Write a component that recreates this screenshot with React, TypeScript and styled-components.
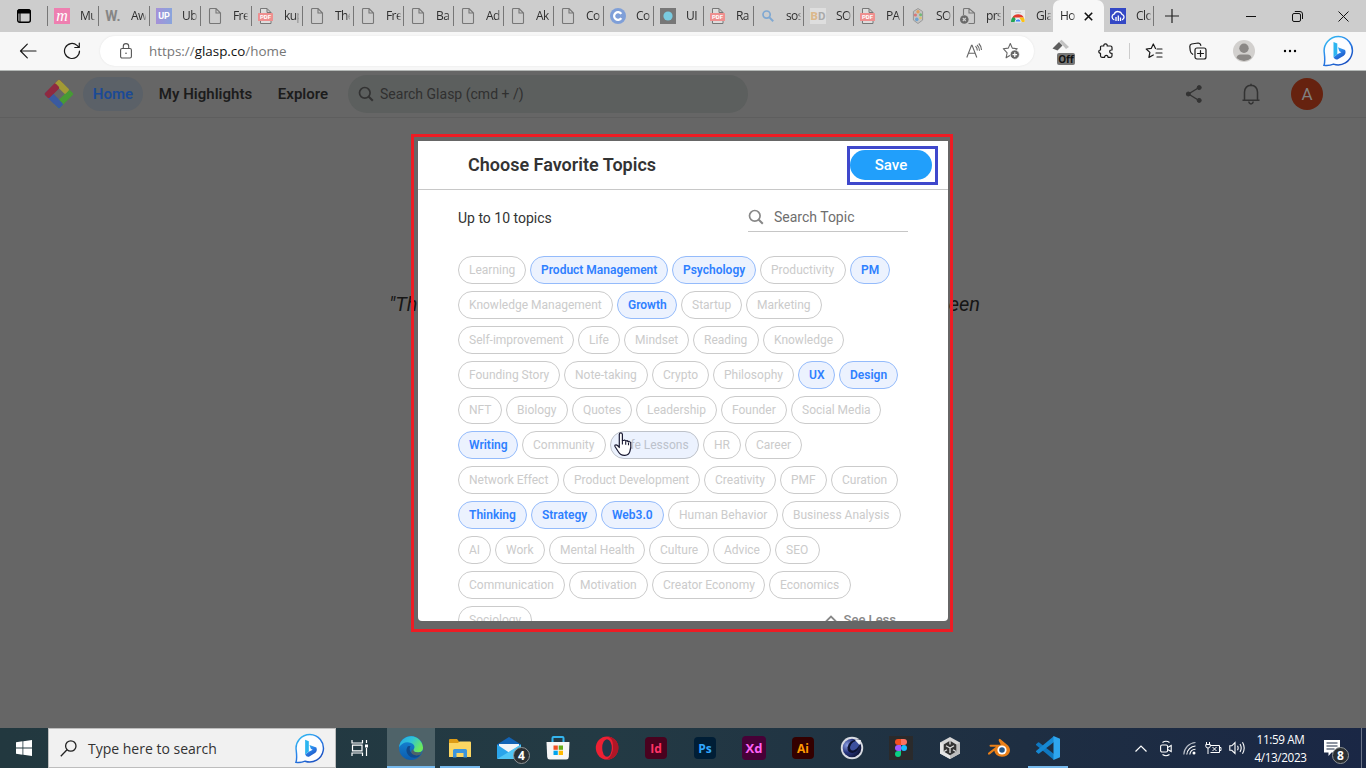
import React from "react";
import styled, { createGlobalStyle, css } from "styled-components";

const UI = `"Open Sans", "Noto Sans", sans-serif`;

const GlobalStyle = createGlobalStyle`
  * { box-sizing: border-box; }
  html, body { margin: 0; padding: 0; overflow: hidden; }
  body { font-family: Roboto, sans-serif; }
  svg { display: block; flex: none; }
`;

const Screen = styled.div`
  width: 1366px;
  height: 768px;
  display: flex;
  flex-direction: column;
  overflow: hidden;
  background: #666;
`;

/* ---------- Tab strip ---------- */

const TabStrip = styled.div`
  height: 32px;
  display: flex;
  background: #cdcdcd;
  flex: none;
`;

const TabActions = styled.div`
  width: 47px;
  display: flex;
  align-items: center;
  justify-content: center;
`;

const Tab = styled.div<{ $w: number }>`
  width: ${(p) => p.$w}px;
  height: 20px;
  margin-top: 6px;
  padding-left: 6px;
  border-left: 1px solid #777;
  display: flex;
  align-items: center;
  gap: 10px;
  overflow: hidden;
  flex: none;
`;

const TabTitle = styled.span<{ $w?: number }>`
  width: ${(p) => p.$w ?? 15}px;
  font: 12px/16px ${UI};
  letter-spacing: -0.6px;
  color: #2e2e2e;
  white-space: nowrap;
  overflow: hidden;
  mask-image: linear-gradient(to right, #000 75%, rgba(0, 0, 0, 0.2) 100%);
`;

const ActiveTab = styled.div`
  width: 51px;
  height: 32px;
  padding-left: 7px;
  display: flex;
  align-items: center;
  gap: 8px;
  background: #f7f7f7;
  border-radius: 7px 7px 0 0;
  flex: none;
`;

const LastTab = styled(Tab)`
  border-left: 0;
  border-right: 1px solid #777;
  padding-left: 6px;
`;

const WindowControls = styled.div`
  margin-left: auto;
  display: flex;
`;

const Slot = styled.div<{ $w: number }>`
  width: ${(p) => p.$w}px;
  height: 100%;
  display: flex;
  align-items: center;
  justify-content: center;
  flex: none;
`;

const LetterIcon = styled.span<{ $bg: string; $fg: string; $size?: number; $script?: boolean }>`
  width: 16px;
  height: 16px;
  display: flex;
  align-items: center;
  justify-content: center;
  background: ${(p) => p.$bg};
  color: ${(p) => p.$fg};
  font: ${(p) => (p.$script ? `italic 400 ${p.$size}px/16px "Liberation Serif", serif` : `700 ${p.$size ?? 11}px/16px Roboto, sans-serif`)};
  flex: none;
  b { color: #dcb98c; }
`;

const FileIcon = () => (
  <svg width="16" height="16" viewBox="0 0 16 16" fill="none" stroke="#777" strokeWidth="1.1">
    <path d="M2.5 1.5Q2.5.5 3.5.5H9l4.5 4.5v9.5q0 1-1 1h-9q-1 0-1-1zM9 .5V5h4.5" />
  </svg>
);

const PdfIcon = () => (
  <svg width="16" height="16" viewBox="0 0 16 16">
    <path d="M2.500.5H9l4 4v11H2.500zM9 .5v4h4" fill="#ddd" stroke="#777" />
    <rect x="0" y="5" width="15" height="8" rx=".6" fill="#ee8f8f" />
    <text x="7.5" y="11.300" fontSize="6" fontWeight="700" fill="#fff" textAnchor="middle" fontFamily="Roboto, sans-serif">PDF</text>
  </svg>
);

const favicons: Record<string, React.ReactNode> = {
  m: <LetterIcon $bg="#ee7fb0" $fg="#fff" $size={16} $script>m</LetterIcon>,
  w: <LetterIcon $bg="transparent" $fg="#868686" $size={14}>W.</LetterIcon>,
  up: <LetterIcon $bg="linear-gradient(90deg,#a591d8,#89a4dc)" $fg="#fff" $size={9}>UP</LetterIcon>,
  file: <FileIcon />,
  pdf: <PdfIcon />,
  c: (
    <svg width="16" height="16" viewBox="0 0 16 16">
      <circle cx="8" cy="8" r="8" fill="#7f9fd8" />
      <path d="M11.3 5.9A3.9 3.9 0 1 0 11.3 10.1" fill="none" stroke="#fff" strokeWidth="2.2" />
    </svg>
  ),
  dot: (
    <svg width="16" height="16" viewBox="0 0 16 16">
      <path fill="#777" d="M0 0h16v16H0z" />
      <circle cx="8" cy="8" r="4.6" fill="#7acbe0" />
    </svg>
  ),
  search: (
    <svg width="16" height="16" viewBox="0 0 16 16" fill="none" stroke="#7fa8d2">
      <circle cx="6.600" cy="6.600" r="3.600" strokeWidth="1.700" />
      <path d="M9.400 9.400l3.800 3.800" strokeWidth="2" />
    </svg>
  ),
  bd: <LetterIcon $bg="#dedede" $fg="#aaa" $size={11.5}><b>B</b>D</LetterIcon>,
  hex: (
    <svg width="16" height="16" viewBox="0 0 16 16">
      <path d="M8 .5l4.600 3v8.600L8 15.500l-4.600-3.400V3.500z" fill="#c4c4c4" stroke="#999" />
      <circle cx="8" cy="3.700" r="1.700" fill="#e0a060" />
      <circle cx="5.400" cy="7" r="1.600" fill="#d87878" />
      <circle cx="10.600" cy="6.800" r="1.500" fill="#72b878" />
      <circle cx="6.800" cy="11.400" r="1.800" fill="#70a4d0" />
      <circle cx="10.500" cy="10" r="1.300" fill="#e0c070" />
    </svg>
  ),
  broken: (
    <svg width="16" height="16" viewBox="0 0 16 16">
      <path d="M3.500 7V1.500q0-1 1-1H9L14.500 5v9.500q0 1-1 1H8.500M9 .5V5h5" fill="none" stroke="#777" strokeWidth="1.100" />
      <circle cx="4.300" cy="11.500" r="4.300" fill="#6a6a6a" />
      <path d="M2.800 10l3 3m0-3l-3 3" stroke="#d0d0d0" strokeWidth="1.100" />
    </svg>
  ),
  chrome: (
    <svg width="16" height="16" viewBox="0 0 16 16">
      <path d="M1 2h14v12H1z" fill="#e9e9e9" />
      <path d="M5 4.500h6" stroke="#ccc" />
      <path d="M1 14a7 7 0 0 1 3-6l3 6z" fill="#23a455" />
      <path d="M2.500 9.500a6.500 6.500 0 0 1 11.300 0H8z" fill="#e33b2e" />
      <path d="M13.800 9.500A7 7 0 0 1 14.600 14H9l1-4.500z" fill="#fbc116" />
      <path d="M5 14a3.100 3.100 0 0 1 6.200 0z" fill="#4285f4" stroke="#fff" strokeWidth=".8" />
    </svg>
  ),
  cloud: (
    <svg width="16" height="16" viewBox="0 0 16 16">
      <path fill="#3448c5" d="M0 0h16v16H0z" />
      <path d="M4.300 11.800a2.900 2.900 0 0 1-.2-5.600 4.200 4.200 0 0 1 7.900.2 2.800 2.800 0 0 1 0 5.400" fill="none" stroke="#fff" strokeWidth="1.300" />
      <path d="M6 9v4M8.300 7.500V13M10.500 9.500V13" stroke="#fff" strokeWidth="1.300" />
    </svg>
  ),
};

const tabs: [string, string, number][] = [
  ["m", "Mu", 51], ["w", "Aw", 51], ["up", "Ub", 51], ["file", "Fre", 51], ["pdf", "kup", 51],
  ["file", "The", 51], ["file", "Fre", 50], ["file", "Ba", 50], ["file", "Ad", 50], ["file", "Ak", 50],
  ["file", "Co", 50], ["c", "Co", 50], ["dot", "UI", 50], ["pdf", "Ra", 50], ["search", "sos", 50],
  ["bd", "SO", 50], ["pdf", "PA", 50], ["hex", "SO", 50], ["broken", "prs", 50], ["chrome", "Gla", 50],
];

/* ---------- Address bar ---------- */

const Toolbar = styled.div`
  height: 39px;
  display: flex;
  align-items: center;
  background: #f7f7f7;
  border-bottom: 1px solid #b4b8b6;
  flex: none;
`;

const AddressBar = styled.div`
  width: 934px;
  height: 30px;
  padding: 0 14px 0 20px;
  display: flex;
  align-items: center;
  background: #fff;
  border-radius: 15px;
  box-shadow: 0 0 2px #e2e2e2;
  flex: none;
`;

const Url = styled.span`
  margin: 0 auto 0 17px;
  font: 13.4px/20px ${UI};
  color: #767676;
  b { font-weight: 400; color: #111; }
`;

const Divider = styled.i`
  width: 1px;
  height: 16px;
  background: #ccc;
`;

const BarIcon = ({ w = 18, children }: { w?: number; children: React.ReactNode }) => (
  <svg width={w} height={w} viewBox={`0 0 ${w} ${w}`} fill="none" stroke="#1a1a1a" strokeWidth="1.2" strokeLinecap="round" strokeLinejoin="round">
    {children}
  </svg>
);

const BingIcon = ({ size, id }: { size: number; id: string }) => (
  <svg width={size} height={size} viewBox="0 0 32 32">
    <defs>
      <linearGradient id={id} x1="0" y1="0" x2=".7" y2="1">
        <stop offset="0" stopColor="#35c6f4" />
        <stop offset=".5" stopColor="#2a83ea" />
        <stop offset="1" stopColor="#1a4fc0" />
      </linearGradient>
    </defs>
    <path d="M16.500 1.500a14.200 14.200 0 1 1-5 27.600Q7 31 2 30.300 3.300 27 2.300 18A14.300 14.300 0 0 1 16.500 1.500z" fill="#fcfdff" stroke={`url(#${id})`} strokeWidth="1.500" />
    <path d="M11.500 7l3.800 1.600v10.600l-3.800 3z" fill="#2bb5f0" />
    <path d="M11.500 22.200l3.800-2.900 4-2.100-1.900-1-1.500-3.900 7.200 2.700q1.400 3.600-1.400 5.700l-6.300 3.700q-2.300.7-3.900-2.200z" fill={`url(#${id})`} />
  </svg>
);

/* ---------- Page ---------- */

const Page = styled.main`
  height: 657px;
  position: relative;
  background: #666;
  flex: none;
`;

const SiteHeader = styled.header`
  height: 47px;
  padding-left: 44px;
  display: flex;
  align-items: center;
  border-bottom: 1px solid #5e5e5e;
`;

const NavLink = styled.a<{ $active?: boolean; $w: number }>`
  width: ${(p) => p.$w}px;
  height: 34px;
  display: flex;
  align-items: center;
  justify-content: center;
  border-radius: 17px;
  font-size: 15px;
  font-weight: 600;
  letter-spacing: 0.02px;
  white-space: nowrap;
  color: #1c1c1c;
  ${(p) => p.$active && css`
    color: #1b4a96;
    background: #5b6168;
  `}
`;

const HeaderSearch = styled.div`
  width: 400px;
  height: 38px;
  margin-left: 10px;
  padding-left: 10px;
  display: flex;
  align-items: center;
  gap: 6px;
  border-radius: 19px;
  background: #5c5f5e;
  color: #303030;
  font-size: 14px;
  letter-spacing: 0.01px;
`;

const HeaderActions = styled.div`
  margin-left: auto;
  padding-right: 31px;
  height: 100%;
  display: flex;
  align-items: center;
`;

const Avatar = styled.span`
  width: 32px;
  height: 32px;
  border-radius: 50%;
  display: flex;
  align-items: center;
  justify-content: center;
  background: #66220f;
  color: #808080;
  font-size: 17px;
`;

const Quote = styled.p`
  width: 591px;
  margin: 174px 0 0 389px;
  display: flex;
  justify-content: space-between;
  font: italic 20px/24px Roboto, sans-serif;
  color: #161616;
`;

const Outline = styled.div<{ $x: number; $y: number; $w: number; $h: number; $color: string }>`
  position: absolute;
  left: ${(p) => p.$x}px;
  top: ${(p) => p.$y}px;
  width: ${(p) => p.$w}px;
  height: ${(p) => p.$h}px;
  border: 3px solid ${(p) => p.$color};
  pointer-events: none;
`;

const Modal = styled.section`
  position: absolute;
  left: 418px;
  top: 70px;
  width: 530px;
  height: 480px;
  background: #fff;
  border-radius: 0 0 4px 4px;
  overflow: hidden;
  display: flex;
  flex-direction: column;
`;

const ModalHeader = styled.div`
  height: 49px;
  padding: 0 16px 0 50px;
  display: flex;
  align-items: center;
  justify-content: space-between;
  border-bottom: 1px solid #c8c8c8;
  flex: none;
`;

const ModalTitle = styled.h2`
  margin: 0;
  font-size: 18px;
  line-height: 22px;
  font-weight: 600;
  color: #333;
`;

const SaveButton = styled.button`
  width: 82px;
  height: 30px;
  padding: 0;
  border: 0;
  border-radius: 15px;
  background: #219ffb;
  color: #fff;
  font: 500 15px Roboto, sans-serif;
`;

const FilterRow = styled.div`
  height: 42px;
  margin-bottom: 24px;
  padding: 0 40px;
  display: flex;
  justify-content: space-between;
  flex: none;
`;

const Hint = styled.span`
  font-size: 14px;
  line-height: 56px;
  color: #333;
`;

const TopicSearch = styled.div`
  width: 160px;
  padding-top: 13px;
  display: flex;
  align-items: center;
  gap: 10px;
  border-bottom: 1px solid #c6c6c6;
  font-size: 14px;
  color: #6e6e6e;
`;

const Topics = styled.div`
  padding-left: 40px;
  display: flex;
  flex-direction: column;
  gap: 7px;
`;

const TopicRow = styled.div`
  display: flex;
  gap: 4px;
`;

const Chip = styled.span<{ $w: number; $state: string }>`
  width: ${(p) => p.$w}px;
  height: 28px;
  display: flex;
  align-items: center;
  padding-left: 10px;
  border: 1px solid #cbcbcb;
  border-radius: 14px;
  font-size: 12px;
  white-space: nowrap;
  color: #cbcbcb;
  flex: none;
  ${(p) => p.$state === "on" && css`
    color: #2f80ff;
    font-weight: 600;
    border-color: #94bbfb;
    background: #ecf2fe;
  `}
  ${(p) => p.$state === "hover" && css`
    color: #bcc2cc;
    border-color: #bec2c9;
    background: #ecf2fe;
  `}
`;

const SeeLess = styled.span`
  margin: 4px 52px 0 auto;
  height: 18px;
  display: flex;
  align-items: center;
  gap: 7px;
  font-size: 13px;
  font-weight: 500;
  color: #888;
`;

const Pointer = styled.svg`
  position: absolute;
  left: 613px;
  top: 360px;
`;

const topics: [string, number, string?][][] = [
  [["Learning", 68], ["Product Management", 138, "on"], ["Psychology", 84, "on"], ["Productivity", 86], ["PM", 40, "on"]],
  [["Knowledge Management", 155], ["Growth", 60, "on"], ["Startup", 61], ["Marketing", 76]],
  [["Self-improvement", 116], ["Life", 42], ["Mindset", 65], ["Reading", 66], ["Knowledge", 81]],
  [["Founding Story", 102], ["Note-taking", 84], ["Crypto", 57], ["Philosophy", 81], ["UX", 37, "on"], ["Design", 59, "on"]],
  [["NFT", 44], ["Biology", 62], ["Quotes", 60], ["Leadership", 81], ["Founder", 66], ["Social Media", 90]],
  [["Writing", 60, "on"], ["Community", 84], ["Life Lessons", 89, "hover"], ["HR", 38], ["Career", 57]],
  [["Network Effect", 101], ["Product Development", 137], ["Creativity", 72], ["PMF", 47], ["Curation", 67]],
  [["Thinking", 69, "on"], ["Strategy", 66, "on"], ["Web3.0", 63, "on"], ["Human Behavior", 110], ["Business Analysis", 119]],
  [["AI", 33], ["Work", 50], ["Mental Health", 96], ["Culture", 60], ["Advice", 58], ["SEO", 45]],
  [["Communication", 107], ["Motivation", 79], ["Creator Economy", 113], ["Economics", 82]],
  [["Sociology", 74]],
];

const SearchGlyph = ({ color }: { color: string }) => (
  <svg width="16" height="16" viewBox="0 0 16 16" fill="none" stroke={color}>
    <circle cx="6.800" cy="6.800" r="5.300" strokeWidth="1.700" />
    <path d="M10.500 10.500L14.800 14.800" strokeWidth="2" />
  </svg>
);

/* ---------- Taskbar ---------- */

const Taskbar = styled.footer`
  height: 40px;
  display: flex;
  background: linear-gradient(90deg, #22383f 0%, #233a44 45%, #1e2e42 75%, #1a2745 100%);
  flex: none;
`;

const TaskSearch = styled.div`
  width: 288px;
  height: 40px;
  padding: 0 10px 0 11px;
  display: flex;
  align-items: center;
  background: #f1f1f1;
  border: 1px solid #bdbdbd;
  font: 14px/20px ${UI};
  color: #333;
  flex: none;
  span { margin: 2px auto 0 11px; }
`;

const AppSlot = styled.div<{ $active?: boolean; $running?: boolean }>`
  width: 48px;
  margin-right: 1px;
  height: 40px;
  position: relative;
  display: flex;
  align-items: center;
  justify-content: center;
  background: ${(p) => (p.$active ? "#4f6369" : "transparent")};
  flex: none;
  ${(p) => (p.$active || p.$running) && css`
    &::after {
      content: "";
      position: absolute;
      bottom: 0;
      left: ${p.$active ? 0 : 4}px;
      right: ${p.$active ? 0 : 4}px;
      height: 2px;
      background: #76b9ed;
    }
  `}
`;

const AdobeIcon = styled.span<{ $bg: string; $fg: string; $size?: number }>`
  width: ${(p) => p.$size ?? 22}px;
  height: ${(p) => p.$size ?? 22}px;
  border-radius: 4px;
  display: flex;
  align-items: center;
  justify-content: center;
  background: ${(p) => p.$bg};
  color: ${(p) => p.$fg};
  font: 700 ${(p) => (p.$size ? 13 : 12)}px ${UI};
`;

const Badge = styled.span<{ $x: number; $y: number }>`
  position: absolute;
  left: ${(p) => p.$x}px;
  top: ${(p) => p.$y}px;
  width: 17px;
  height: 17px;
  border-radius: 50%;
  border: 1px solid #8f9496;
  background: #2b3033;
  color: #fff;
  font: 700 12px/15px ${UI};
  text-align: center;
`;

const Tray = styled.div`
  margin-left: auto;
  height: 40px;
  display: flex;
  align-items: center;
`;

const Clock = styled.div`
  width: 63px;
  display: flex;
  flex-direction: column;
  align-items: center;
  font: 11.700px/18px ${UI};
  letter-spacing: -0.36px;
  white-space: nowrap;
  color: #fff;
`;

const Notifications = styled(Slot)`
  position: relative;
  justify-content: flex-start;
  padding-left: 12px;
`;

const ShowDesktop = styled.i`
  width: 5px;
  height: 40px;
  border-left: 1px solid #6b7488;
`;

const EdgeIcon = () => (
  <svg width="24" height="24" viewBox="0 0 24 24">
    <defs>
      <linearGradient id="edgeTop" x1="0" y1="0" x2="1" y2=".5">
        <stop offset="0" stopColor="#27a9e3" />
        <stop offset=".5" stopColor="#2fc2d8" />
        <stop offset="1" stopColor="#6cea5c" />
      </linearGradient>
      <linearGradient id="edgeLow" x1="0" y1="0" x2="0" y2="1">
        <stop offset="0" stopColor="#1689d8" />
        <stop offset="1" stopColor="#0c5cae" />
      </linearGradient>
    </defs>
    <circle cx="12" cy="12" r="12" fill="url(#edgeLow)" />
    <path d="M.1 11A12 12 0 0 1 24 11.500q.2 4.500-4.500 5-3.800.2-5-1.600-.4-.6.300-1.600 2.200-4-2.800-6.300Q5 4.500.1 11z" fill="url(#edgeTop)" />
    <path d="M8.800 10.200q-3 4.800.6 9 3.600 4 9.800 1.800l2.600-2.800q-5 2.400-8.800-.6-3.800-3.400-1.500-7.600z" fill="#114a8b" />
    <path d="M14 13q.3 3.500 5.500 3.500 2 0 3.500-1.200-.5 2.400-1.800 3.300-4.600 2-8-.6-2.300-2.200.8-5z" fill="#4f6369" />
  </svg>
);

const ExplorerIcon = () => (
  <svg width="22" height="19" viewBox="0 0 22 19">
    <path d="M0 1q0-1 1-1h7l2 2.500V6H0z" fill="#dd9c16" />
    <path d="M0 4h9l1.500-1.500H21q1 0 1 1V18H0z" fill="#fbd662" />
    <path d="M4 18.500v-7q0-1.500 1.500-1.500h11q1.500 0 1.500 1.500v7h-3.500V14h-7v4.500z" fill="#3b95dc" />
  </svg>
);

const MailIcon = () => (
  <svg width="24" height="24" viewBox="0 0 24 24">
    <path d="M0 8.500L12 1l12 7.500v3H0z" fill="#1263b5" />
    <path d="M2 8h20v5l-10 7-10-7z" fill="#f1f4f8" />
    <path d="M0 8.500l12 8L24 8.500V22q0 1-1 1H1q-1 0-1-1z" fill="#2aa4ea" />
    <path d="M0 23L24 8.500V22q0 1-1 1z" fill="#50c5f5" />
  </svg>
);

const StoreIcon = () => (
  <svg width="24" height="24" viewBox="0 0 24 24">
    <path d="M6.500 7V2q0-1 1-1h9q1 0 1 1v5" fill="none" stroke="#34b5ee" strokeWidth="2" />
    <path d="M.5 6h23l-.7 15q-.2 2.500-2.500 2.500H3.700Q1.400 23.500 1.200 21z" fill="#f6f6f6" />
    <path d="M7.500 9.500h4.300v4.300H7.500z" fill="#f25022" />
    <path d="M12.700 9.500H17v4.300h-4.300z" fill="#65ad19" />
    <path d="M7.500 14.700h4.300V19H7.500z" fill="#00a4ef" />
    <path d="M12.700 14.700H17V19h-4.300z" fill="#ffb900" />
  </svg>
);

const OperaIcon = () => (
  <svg width="24" height="24" viewBox="0 0 24 24">
    <ellipse cx="12" cy="12" rx="11.200" ry="11.500" fill="#ee2033" />
    <path d="M12 .5q4.500 1 5.500 5.500 1.500 7-1 12-1.500 4-4.500 5.500a11.500 11.500 0 0 0 0-23z" fill="#b01626" />
    <ellipse cx="12" cy="12" rx="4.800" ry="8.800" fill="#22374a" />
  </svg>
);

const CinemaIcon = () => (
  <svg width="24" height="24" viewBox="0 0 24 24">
    <defs>
      <radialGradient id="c4dBall" cx=".25" cy=".35" r=".8">
        <stop offset="0" stopColor="#8c9fe2" />
        <stop offset=".5" stopColor="#27357e" />
        <stop offset="1" stopColor="#0e1433" />
      </radialGradient>
    </defs>
    <circle cx="12" cy="12" r="11.200" fill="#d8dbe2" />
    <circle cx="12" cy="12" r="9.300" fill="url(#c4dBall)" />
    <path d="M20 3.500q-11-.5-12.500 8-.3 5 5 5.500 6-1 7.500-9.500z" fill="#0c1230" />
    <path d="M20 4q-8.500.5-10 7 0 4.300 4 3.300 5.500-3 6-8z" fill="#3c4f9c" />
    <path d="M14.500 3.500l6.500.500-1.500 5z" fill="#eceef4" />
  </svg>
);

const FigmaIcon = () => (
  <svg width="24" height="24" viewBox="0 0 24 24">
    <path fill="#2a2a2b" d="M0 0h24v24H0z" />
    <path d="M12 3H9a3 3 0 0 0 0 6h3z" fill="#f24e1e" />
    <path d="M12 3h3a3 3 0 0 1 0 6h-3z" fill="#ff7262" />
    <path d="M12 9H9a3 3 0 0 0 0 6h3z" fill="#a259ff" />
    <circle cx="15" cy="12" r="3" fill="#1abcfe" />
    <path d="M12 15H9a3 3 0 1 0 3 3z" fill="#0acf83" />
  </svg>
);

const UnityIcon = () => (
  <svg width="22" height="24" viewBox="0 0 22 24">
    <path d="M11 1l10 5.500v11L11 23 1 17.500v-11z" fill="#d6d6d6" />
    <path d="M11 12v11L1 17.500v-11z" fill="#e6e6e6" />
    <path d="M11 12v11l10-5.500v-11z" fill="#bdbdbd" />
    <path d="M11 4.800l6.300 3.600v7.200L11 19.200l-6.300-3.600V8.400z" fill="#333" />
    <path d="M11 5v3.500M17 15.500l-3-1.800M5 15.500l3-1.800M11 12v5M11 12L7 9.700M11 12l4-2.300" stroke="#ddd" strokeWidth="1.300" fill="none" />
  </svg>
);

const BlenderIcon = () => (
  <svg width="24" height="20" viewBox="0 0 24 20">
    <path d="M12 1.200q.7-.7 1.500 0l7.500 6.300q3 3.300 1.500 7-2.300 4.300-7.500 4.300-6.800-.3-7.700-6L3 16.300q-1.500.8-2-.3-.3-.8.600-1.400L9 8.700H3.500q-1.200-.2-1-1.200.2-.7 1-.7h10.300L11.900 2.900q-.6-.9.100-1.700z" fill="#ea8018" />
    <circle cx="15" cy="12" r="4.600" fill="#fff" />
    <circle cx="15" cy="12" r="2.800" fill="#265787" />
  </svg>
);

const CodeIcon = () => (
  <svg width="24" height="24" viewBox="0 0 24 24">
    <path d="M0 8.200l2-1.800q.6-.4 1.200 0L18 18v6L.3 9.300q-.6-.6-.3-1.100z" fill="#0f78c1" />
    <path d="M0 15.800l2 1.800q.6.4 1.200 0L18 6V0L.3 14.700q-.6.600-.3 1.100z" fill="#1688d3" />
    <path d="M17.500 0L24 2.800v18.400L17.500 24z" fill="#2ea5ee" />
  </svg>
);

export default function App() {
  return (
    <Screen>
      <GlobalStyle />
      <TabStrip>
        <TabActions>
          <svg width="14" height="14" viewBox="0 0 14 14">
            <rect x=".7" y=".7" width="12.600" height="12.600" rx="2" fill="none" stroke="#000" strokeWidth="1.400" />
            <path d="M1 1h12v3H1zM3 4v9" stroke="#000" fill="#000" />
          </svg>
        </TabActions>
        {tabs.map(([icon, title, w], i) => (
          <Tab key={i} $w={w}>
            {favicons[icon]}
            <TabTitle>{title}</TabTitle>
          </Tab>
        ))}
        <ActiveTab>
          <TabTitle $w={16}>Ho</TabTitle>
          <svg width="9" height="9" viewBox="0 0 9 9"><path d="M.8.8l7.400 7.400m0-7.400L.8 8.200" stroke="#111" strokeWidth="1.600" /></svg>
        </ActiveTab>
        <LastTab $w={50}>
          {favicons.cloud}
          <TabTitle>Clo</TabTitle>
        </LastTab>
        <Slot $w={35}>
          <svg width="14" height="14" viewBox="0 0 14 14"><path d="M7 0v14M0 7h14" stroke="#222" strokeWidth="1.200" /></svg>
        </Slot>
        <WindowControls>
          <Slot $w={46}><svg width="10" height="10"><path d="M0 5.500h10" stroke="#111" /></svg></Slot>
          <Slot $w={46}>
            <svg width="11" height="11" viewBox="0 0 11 11" fill="none" stroke="#111">
              <rect x=".5" y="2.500" width="8" height="8" rx="1.500" />
              <path d="M2.800.5H8q2.500 0 2.500 2.500v5" />
            </svg>
          </Slot>
          <Slot $w={46}><svg width="11" height="11" viewBox="0 0 11 11"><path d="M.5.5l10 10m0-10l-10 10" stroke="#111" /></svg></Slot>
        </WindowControls>
      </TabStrip>

      <Toolbar>
        <Slot $w={56}><BarIcon><path d="M17 9H1.500M8.300 2.200L1.500 9l6.800 6.800" /></BarIcon></Slot>
        <Slot $w={32}>
          <BarIcon><path d="M16.500 9A7.500 7.500 0 1 1 14 3.400L16 5.300M16.300 1v4.500h-4.500" /></BarIcon>
        </Slot>
        <Slot $w={12} />
        <AddressBar>
          <svg width="12" height="16" viewBox="0 0 12 16" fill="none" stroke="#555" strokeWidth="1.100">
            <rect x=".6" y="5.500" width="10.800" height="9.500" rx="1.500" />
            <path d="M3.300 5.500V3.300a2.700 2.700 0 0 1 5.400 0v2.200" />
            <circle cx="6" cy="10.200" r=".8" fill="#555" stroke="none" />
          </svg>
          <Url>https://<b>glasp.co</b>/home</Url>
          <svg width="17" height="16" viewBox="0 0 17 16" fill="none" stroke="#666" strokeWidth="1.100">
            <path d="M.8 14.500L5.500 2.200h.6l4.700 12.300M2.500 10.300h6.700M9.500 3.200q1.800 1.800 1.800 4.300M11 1.800q2.500 2.300 2.500 6M12.800.5q2.800 3 2.700 6.500" />
          </svg>
          <Slot $w={19} />
          <svg width="18" height="18" viewBox="0 0 18 18">
            <path d="M8.300 1.500l2 4.600 5 .6-3.700 3.300.3 2-3.600 1.300-4.200 2.500 1-5L1.300 6.700l5-.6z" fill="none" stroke="#666" strokeWidth="1.100" strokeLinejoin="round" />
            <circle cx="12.800" cy="12.600" r="4.600" fill="#666" stroke="#fff" strokeWidth=".7" />
            <path d="M12.800 10.300v4.600M10.500 12.600h4.600" stroke="#fff" strokeWidth="1.200" />
          </svg>
        </AddressBar>
        <Slot $w={60}>
          <svg width="24" height="28" viewBox="0 0 24 28">
            <path d="M.5 11.500l6.500-6.500 3.500 3.500-5 5z" fill="#5e5e5e" />
            <path d="M7.500 4.500l2-1.800L17 10l-3 2z" fill="#c2c2c2" />
            <rect x="5" y="16" width="18" height="12" rx="2" fill="#777" />
            <text x="14" y="25.700" fontSize="10" fontWeight="700" textAnchor="middle" fill="#111" fontFamily="Open Sans, sans-serif">Off</text>
          </svg>
        </Slot>
        <Slot $w={24}>
          <BarIcon w={16}>
            <path d="M3.500 3h2.300Q5.600.8 7.500.8T9.200 3h3.300q1.500 0 1.500 1.500V7q-2.300-.2-2.300 1.600T14 10.300v2.500q0 1.500-1.500 1.500H10q0-2-1.700-2t-1.700 2H4q-1.500 0-1.500-1.500v-2.500Q.8 10.300.8 8.600T2.500 7V4.200Q2.500 3 3.500 3z" />
          </BarIcon>
        </Slot>
        <Slot $w={11} />
        <Divider />
        <Slot $w={48}>
          <BarIcon>
            <path d="M10.500 6.500L8.300 2 6.200 6.400l-5 .6 3.700 3.400-1 5 4.400-2.400M12 7h5M11 11h6M12 15h5" />
          </BarIcon>
        </Slot>
        <Slot $w={40}>
          <BarIcon>
            <rect x="6" y="6" width="11" height="11" rx="2" />
            <path d="M11.500 8.500v6M8.500 11.500h6M3.700 12.300Q1.500 11 1.200 8.500L.8 4.500q0-2 1.800-2.500l6.500-1q2.200 0 2.700 2.300" />
          </BarIcon>
        </Slot>
        <Slot $w={52}>
          <svg width="22" height="22" viewBox="0 0 22 22">
            <circle cx="11" cy="11" r="11" fill="#d2d0ce" />
            <circle cx="11" cy="8.200" r="4.700" fill="#8b8886" />
            <path d="M3.500 18q.5-3.500 4-3.500h7q3.500 0 4 3.500-7.500 6-15 0z" fill="#8b8886" />
          </svg>
        </Slot>
        <Slot $w={40}>
          <svg width="14" height="4" viewBox="0 0 14 4"><circle cx="2" cy="2" r="1.200" /><circle cx="7" cy="2" r="1.200" /><circle cx="12" cy="2" r="1.200" /></svg>
        </Slot>
        <Slot $w={56}><BingIcon size={32} id="bingBar" /></Slot>
      </Toolbar>

      <Page>
        <SiteHeader>
          <svg width="30" height="30" viewBox="0 0 30 30">
            <g transform="rotate(45 15 15)">
              <rect x="19" y="4.500" width="6.500" height="21" rx="1.500" fill="#479a35" />
              <rect x="4.500" y="4.500" width="6.500" height="21" rx="1.500" fill="#8f2a40" />
              <rect x="4.500" y="4.500" width="15" height="6.500" rx="1.500" fill="#a29a35" />
              <rect x="4.500" y="19" width="15" height="6.500" rx="1.500" fill="#3a5aa0" />
              <rect x="10" y="19" width="15.500" height="6.500" rx="1.500" fill="#3a5aa0" />
              <rect x="4.500" y="10" width="6.500" height="15.500" rx="1.500" fill="#8f2a40" />
            </g>
          </svg>
          <Slot $w={9} />
          <NavLink $active $w={60}>Home</NavLink>
          <Slot $w={6} />
          <NavLink $w={113}>My Highlights</NavLink>
          <Slot $w={6} />
          <NavLink $w={70}>Explore</NavLink>
          <HeaderSearch>
            <SearchGlyph color="#333" />
            Search Glasp (cmd + /)
          </HeaderSearch>
          <HeaderActions>
            <Slot $w={56}>
              <svg width="18" height="20" viewBox="0 0 18 20" fill="#333" stroke="#333">
                <path d="M14 3.500L3.500 10 14 16.500" fill="none" strokeWidth="1.400" />
                <circle cx="14.200" cy="3.600" r="2" /><circle cx="3.300" cy="10" r="2" /><circle cx="14.200" cy="16.400" r="2" />
              </svg>
            </Slot>
            <Slot $w={57}>
              <svg width="20" height="22" viewBox="0 0 20 22" fill="none" stroke="#333" strokeWidth="1.500">
                <path d="M1.500 17.200h17M3.500 17V9Q4 2.600 10 2.300 16 2.600 16.500 9v8M7.800 18.500q.3 2.400 2.200 2.400t2.200-2.400M10 .8v1.500" />
              </svg>
            </Slot>
            <Slot $w={56}><Avatar>A</Avatar></Slot>
          </HeaderActions>
        </SiteHeader>

        <Quote><span>"Th</span><span>een</span></Quote>

        <Modal>
          <ModalHeader>
            <ModalTitle>Choose Favorite Topics</ModalTitle>
            <SaveButton>Save</SaveButton>
          </ModalHeader>
          <FilterRow>
            <Hint>Up to 10 topics</Hint>
            <TopicSearch>
              <SearchGlyph color="#888" />
              Search Topic
            </TopicSearch>
          </FilterRow>
          <Topics>
            {topics.map((row, i) => (
              <TopicRow key={i}>
                {row.map(([label, w, state]) => (
                  <Chip key={label} $w={w} $state={state ?? "off"}>{label}</Chip>
                ))}
                {i === topics.length - 1 && (
                  <SeeLess>
                    <svg width="12" height="12" viewBox="0 0 12 12"><path d="M1 8.500l5-5 5 5" fill="none" stroke="#888" strokeWidth="1.800" /></svg>
                    See Less
                  </SeeLess>
                )}
              </TopicRow>
            ))}
          </Topics>
        </Modal>
        <Outline $x={411} $y={63} $w={542} $h={498} $color="#ed1c24" />
        <Outline $x={847} $y={75} $w={91} $h={39} $color="#3f48cc" />
        <Pointer width="20" height="26" viewBox="0 0 20 26">
          <path d="M6.300 14.800V3.300q.2-1.500 1.500-1.500t1.600 1.500v6l1.300.2q.8-1 2.200.6 1.300-.9 2.300.5 1.800-.5 2.500 1.200.6 5-.8 8.500-1 3.800-5 4-4.500.2-6.400-3.300L2 15.500q-.6-1.800 1.200-1.700 1.500.1 3.100 2.700z" fill="#fff" stroke="#1a1a33" strokeWidth="1.200" strokeLinejoin="round" />
          <path d="M9.400 9v4.500M12.700 10.500v3.300M15.500 11.500v2.800" stroke="#1a1a33" strokeWidth="1.100" />
        </Pointer>
      </Page>

      <Taskbar>
        <Slot $w={48}>
          <svg width="16" height="16" viewBox="0 0 16 16" fill="#fff"><path d="M0 2.200L6.500 1.300v6.300H0zM7.300 1.200L16 0v7.600H7.300zM0 8.400h6.500v6.300L0 13.800zM7.300 8.400H16V16l-8.700-1.200z" /></svg>
        </Slot>
        <TaskSearch>
          <svg width="17" height="17" viewBox="0 0 17 17" fill="none" stroke="#222" strokeWidth="1.300">
            <circle cx="10.800" cy="6" r="5.200" /><path d="M7 9.800L.8 16.200" />
          </svg>
          <span>Type here to search</span>
          <BingIcon size={31} id="bingTask" />
        </TaskSearch>
        <Slot $w={48}>
          <svg width="18" height="16" viewBox="0 0 18 16" fill="none" stroke="#fff" strokeWidth="1.200">
            <path d="M1 0v3h10.500V0M1 16v-3h10.500v3M15.500 0v3M15.500 8v8" />
            <path d="M1.500 5.200h9.500v5.600H1.500z" /><path d="M14 4.500h3v3h-3z" fill="#fff" stroke="none" />
          </svg>
        </Slot>
        <Slot $w={3} />
        <AppSlot $active><EdgeIcon /></AppSlot>
        <AppSlot $running><ExplorerIcon /></AppSlot>
        <AppSlot><MailIcon /><Badge $x={28} $y={19}>4</Badge></AppSlot>
        <AppSlot><StoreIcon /></AppSlot>
        <AppSlot><OperaIcon /></AppSlot>
        <AppSlot><AdobeIcon $bg="#49021f" $fg="#ff3366">Id</AdobeIcon></AppSlot>
        <AppSlot><AdobeIcon $bg="#001e36" $fg="#31a8ff">Ps</AdobeIcon></AppSlot>
        <AppSlot><AdobeIcon $bg="#470137" $fg="#ff61f6" $size={24}>Xd</AdobeIcon></AppSlot>
        <AppSlot><AdobeIcon $bg="#330000" $fg="#ff9a00">Ai</AdobeIcon></AppSlot>
        <AppSlot><CinemaIcon /></AppSlot>
        <AppSlot><FigmaIcon /></AppSlot>
        <AppSlot><UnityIcon /></AppSlot>
        <AppSlot><BlenderIcon /></AppSlot>
        <AppSlot $running><CodeIcon /></AppSlot>
        <Tray>
          <Slot $w={24}><svg width="12" height="7" viewBox="0 0 12 7"><path d="M.5 6.500L6 1l5.500 5.500" fill="none" stroke="#fff" strokeWidth="1.200" /></svg></Slot>
          <Slot $w={25}>
            <svg width="12" height="17" viewBox="0 0 12 17" fill="none" stroke="#fff" strokeWidth="1.100">
              <rect x=".6" y="5" width="7" height="7" rx="1.500" /><path d="M7.600 7.500l3.600-2v6l-3.600-2M2.500 2.500Q6 0 9.500 2.500M2.500 14.500Q6 17 9.500 14.500" />
            </svg>
          </Slot>
          <Slot $w={24}>
            <svg width="14" height="14" viewBox="0 0 14 14" fill="none" stroke="#fff" strokeWidth="1.100">
              <path d="M.8 13.500A12.500 12.500 0 0 1 12.500 1.500" stroke="#b8bec8" /><path d="M3.800 13.500A9 9 0 0 1 12.500 5M6.800 13.500A6 6 0 0 1 12.500 8.300" /><circle cx="11" cy="12" r="1.500" fill="#fff" stroke="none" />
            </svg>
          </Slot>
          <Slot $w={23}>
            <svg width="17" height="14" viewBox="0 0 17 14" fill="none" stroke="#fff" strokeWidth="1">
              <path d="M5.500 4.500h9v7h-9M14.500 6.500h1.500v3h-1.500M1.500 1v2M4.500 1v2M.8 3.500h4.500v1.500q0 2-2.300 2T.8 5zM3 7v6M7.500 6l4 4m0-4l-4 4" />
            </svg>
          </Slot>
          <Slot $w={24}>
            <svg width="17" height="14" viewBox="0 0 17 14" fill="none" stroke="#fff" strokeWidth="1.100">
              <path d="M.8 4.800h2L6 1.500v11L2.800 9.300h-2zM8.500 4.800q1.300 2.200 0 4.400M11 3q2.400 4 0 8M13.500 1.200q3.400 5.800 0 11.600" />
            </svg>
          </Slot>
          <Clock><span>11:59 AM</span><span>4/13/2023</span></Clock>
          <Notifications $w={49}>
            <svg width="16" height="16" viewBox="0 0 16 16">
              <path d="M0 0h16v12.500H7.500L4.500 16v-3.500H0z" fill="#fff" /><path d="M2.500 3h11M2.500 6h11M2.500 9h8" stroke="#1d2a45" strokeWidth="1.200" />
            </svg>
            <Badge $x={20} $y={19}>8</Badge>
          </Notifications>
          <ShowDesktop />
        </Tray>
      </Taskbar>
    </Screen>
  );
}
